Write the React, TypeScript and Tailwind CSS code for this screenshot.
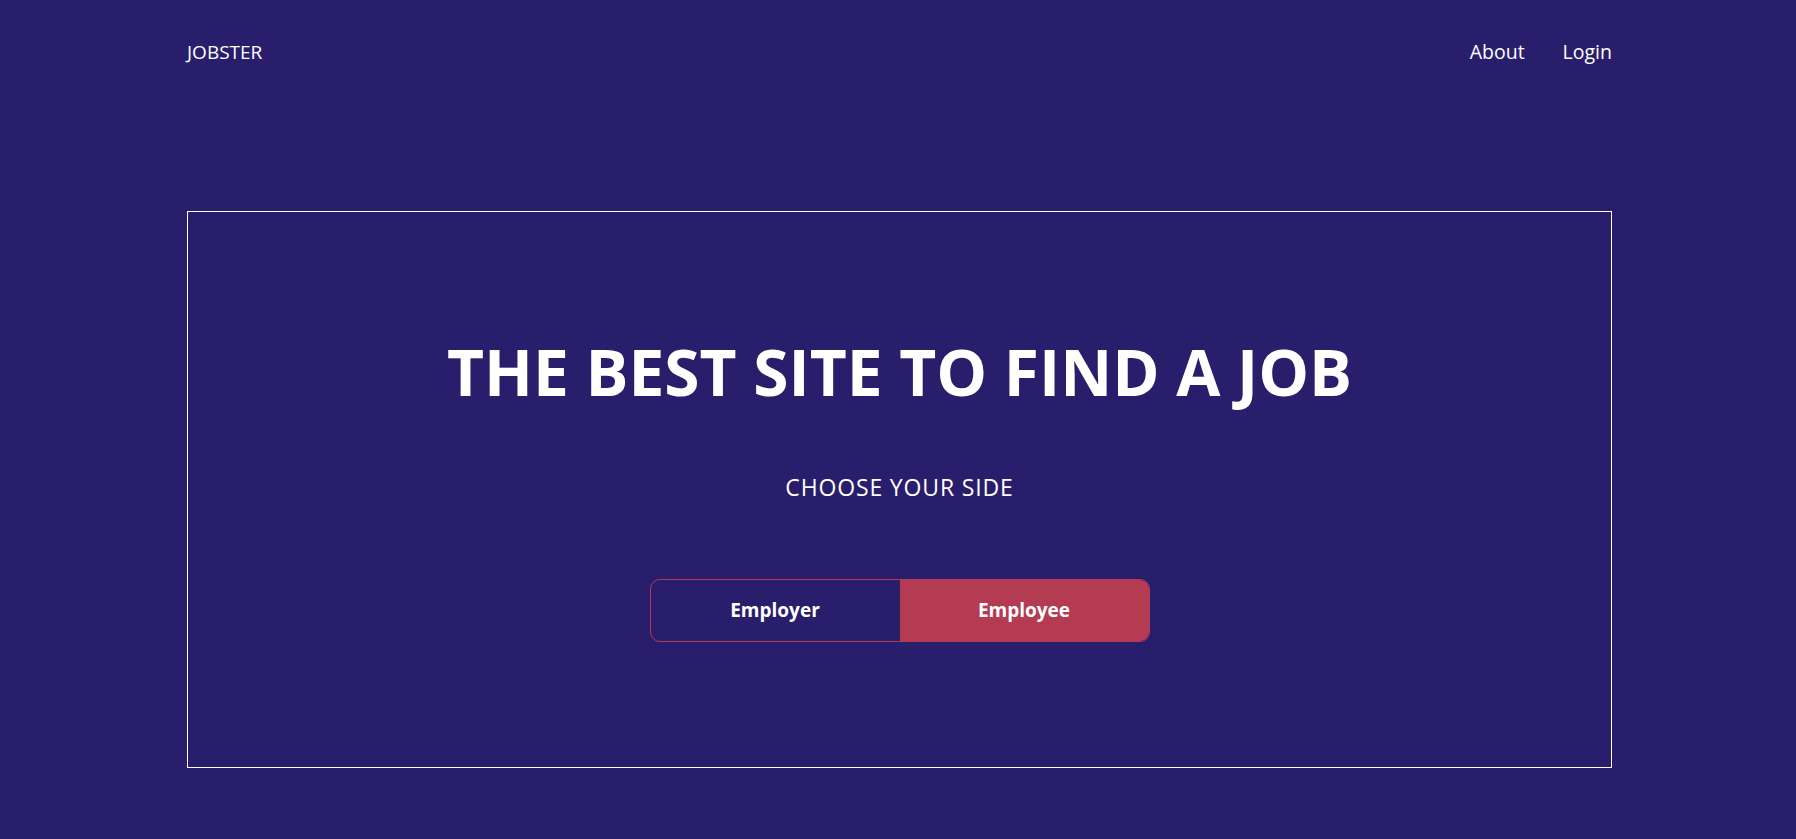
import React from "react";

export default function App() {
  return (
    <div
      className="min-h-screen w-full bg-[#291e6b] text-white"
      style={{ fontFamily: '"Open Sans", "Noto Sans", sans-serif' }}
    >
      <div className="ml-[187px] w-[1425px]">
        <nav className="flex h-[104px] items-center justify-between">
          <div className="text-[19px]">JOBSTER</div>
          <div className="flex items-center gap-[38px] text-[19.5px]">
            <a>About</a>
            <a>Login</a>
          </div>
        </nav>
        <div className="mt-[107px] flex h-[557px] flex-col items-center border border-white pt-[128px]">
          <h1 className="text-[64px] font-bold leading-none">THE BEST SITE TO FIND A JOB</h1>
          <p className="mt-[72px] text-[23px] leading-none tracking-[0.85px]">CHOOSE YOUR SIDE</p>
          <div className="mt-[80px] flex h-[63px] w-[500px] overflow-hidden rounded-[10px] border border-[#b43b52]">
            <button className="flex flex-1 items-center justify-center text-[19px] font-bold">Employer</button>
            <button className="flex flex-1 items-center justify-center bg-[#b43b52] text-[19px] font-bold">Employee</button>
          </div>
        </div>
      </div>
    </div>
  );
}
